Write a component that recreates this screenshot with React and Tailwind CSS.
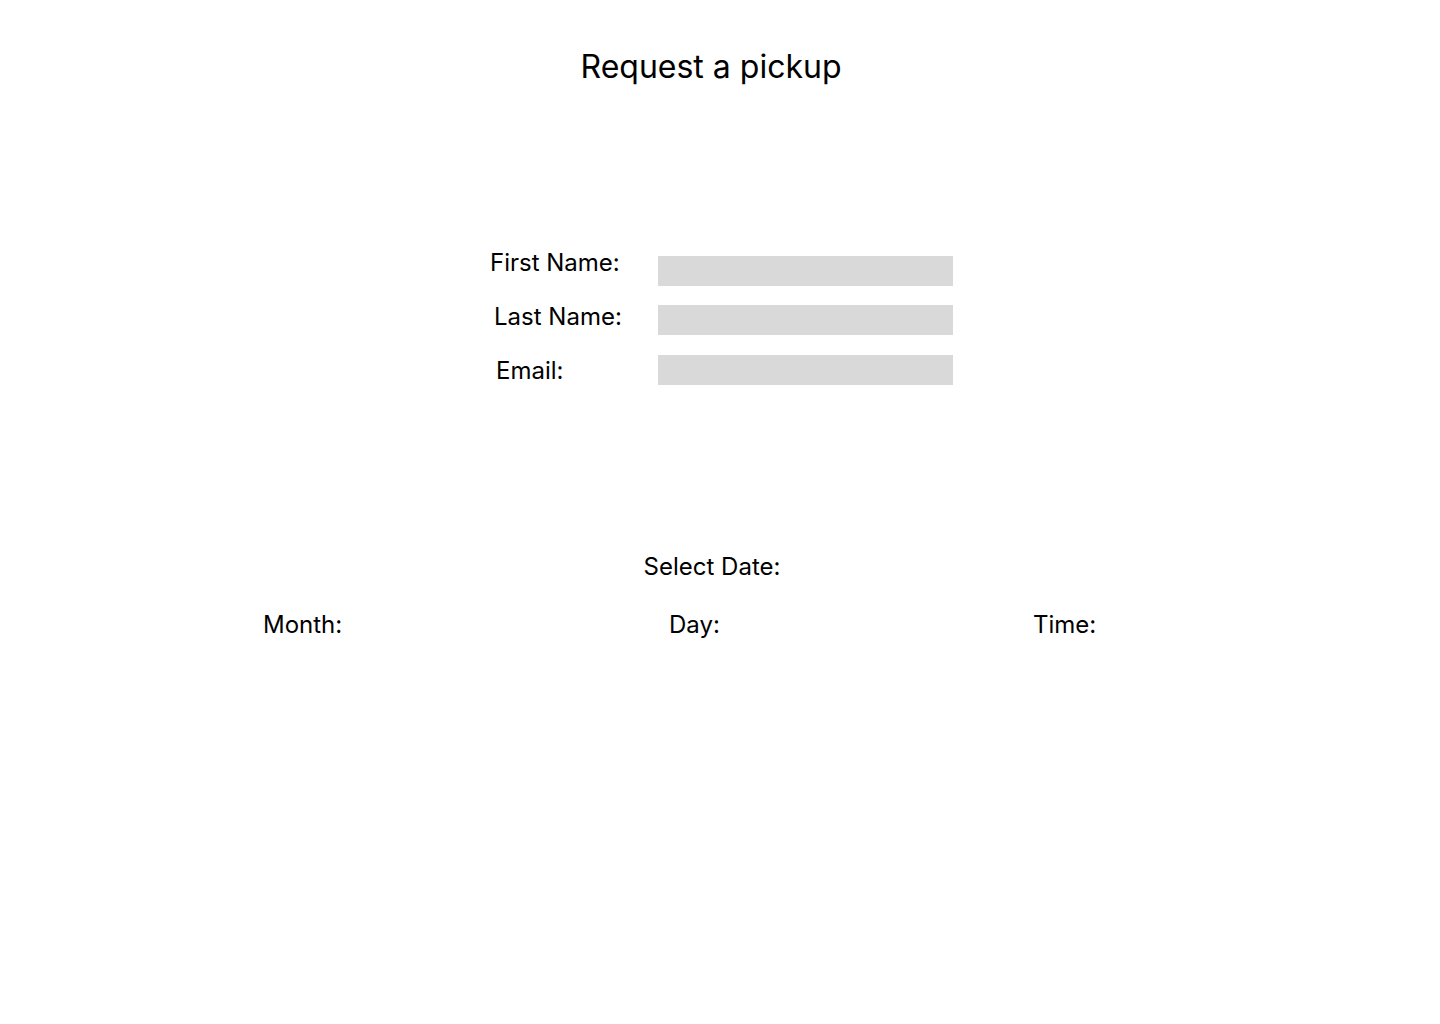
import React from 'react';

function Field({ label, labelOffset, labelWidth, labelTop, inputTop, height }) {
  return (
    <div className="flex items-start" style={{ height }}>
      <span
        className="text-[24px] leading-[29px] shrink-0"
        style={{ marginLeft: labelOffset, width: labelWidth, marginTop: labelTop }}
      >
        {label}
      </span>
      <div className="h-[30px] w-[295px] bg-[#d9d9d9]" style={{ marginTop: inputTop }} />
    </div>
  );
}

export default function App() {
  return (
    <div className="min-h-[1024px] w-full bg-white text-black font-['Inter',sans-serif]">
      {/* Title */}
      <div className="pt-[47px] flex justify-center pr-[18px]">
        <h1 className="text-[32px] leading-[39px] font-normal">Request a pickup</h1>
      </div>

      {/* Contact fields */}
      <div className="mt-[162px] flex flex-col">
        <Field label="First Name:" labelOffset={490} labelWidth={168} labelTop={0} inputTop={8} height={54} />
        <Field label="Last Name:" labelOffset={494} labelWidth={164} labelTop={0} inputTop={3} height={53} />
        <Field label="Email:" labelOffset={496} labelWidth={162} labelTop={1} inputTop={0} height={30} />
      </div>

      {/* Date */}
      <div className="mt-[167px] flex justify-center pr-[16px]">
        <span className="text-[24px] leading-[29px]">Select Date:</span>
      </div>
      <div className="mt-[29px] flex text-[24px] leading-[29px]">
        <span className="ml-[263px] w-[406px]">Month:</span>
        <span className="w-[364px]">Day:</span>
        <span>Time:</span>
      </div>
    </div>
  );
}
